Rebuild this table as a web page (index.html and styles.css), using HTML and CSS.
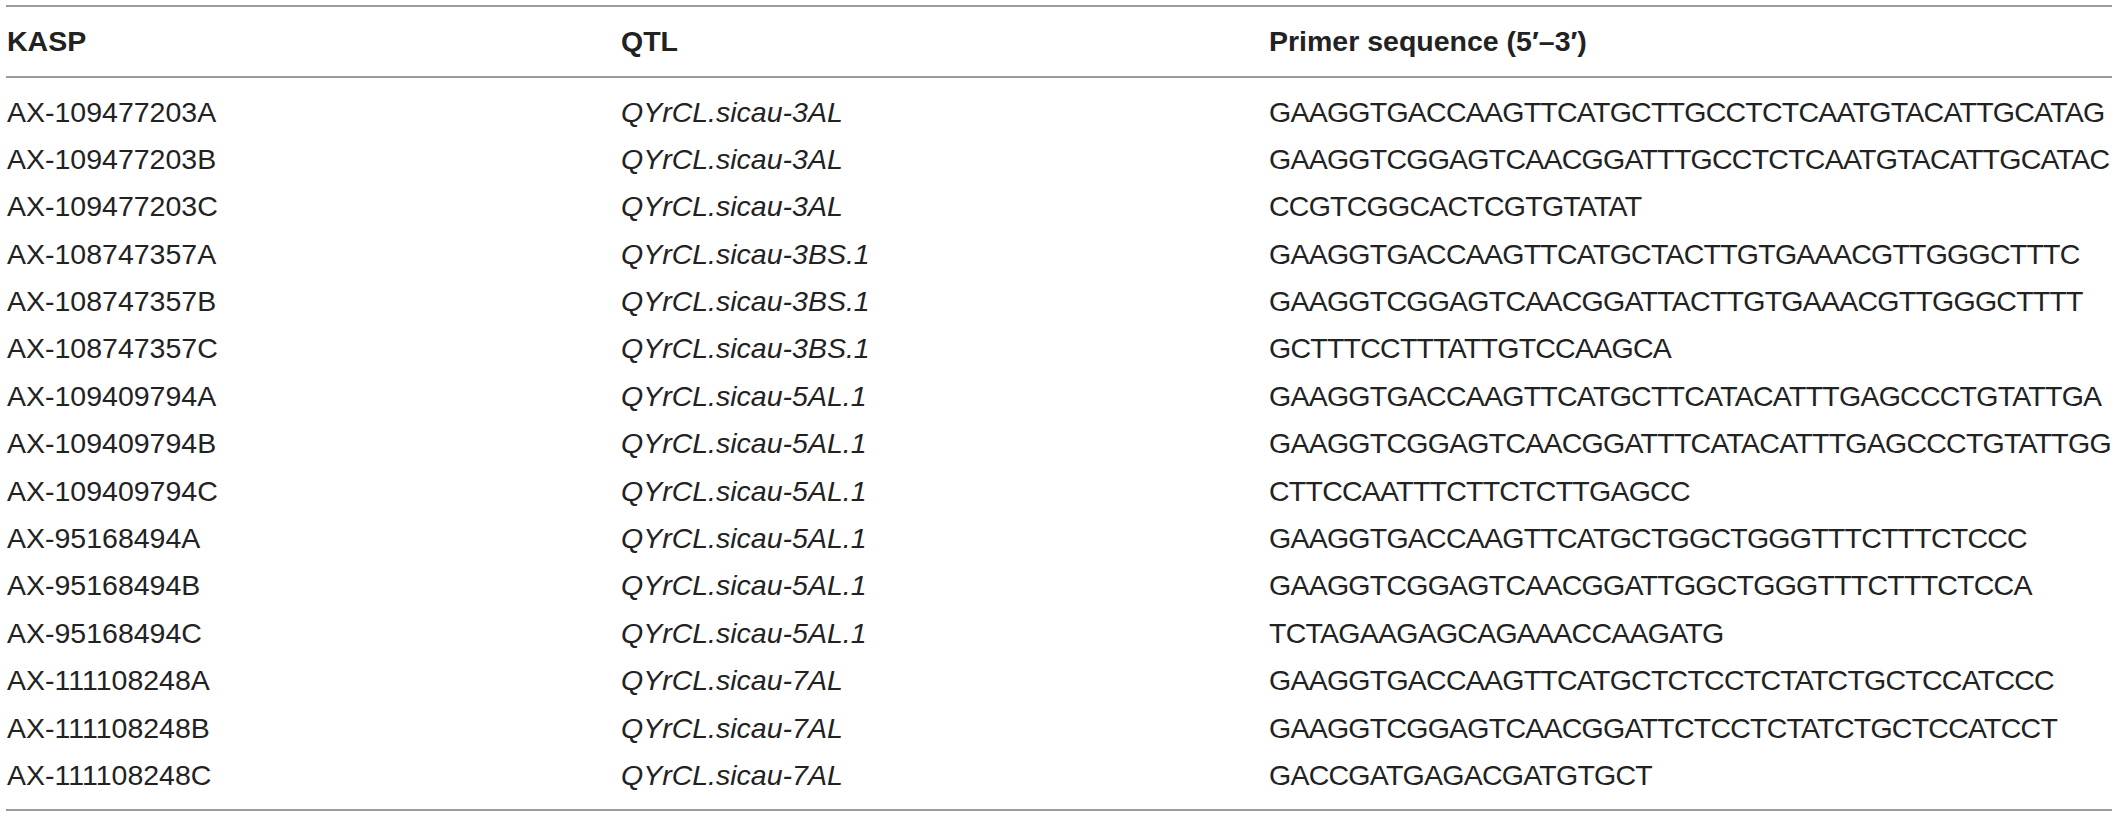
FILE: index.html
```html
<!DOCTYPE html>
<html>
<head>
<meta charset="utf-8">
<link rel="stylesheet" href="styles.css">
</head>
<body>
<div class="table">
  <div class="row head">
    <div class="cell">KASP</div>
    <div class="cell">QTL</div>
    <div class="cell">Primer sequence (5′–3′)</div>
  </div>
  <div class="body">
    <div class="row"><div class="cell">AX-109477203A</div><div class="cell qtl">QYrCL.sicau-3AL</div><div class="cell seq">GAAGGTGACCAAGTTCATGCTTGCCTCTCAATGTACATTGCATAG</div></div>
    <div class="row"><div class="cell">AX-109477203B</div><div class="cell qtl">QYrCL.sicau-3AL</div><div class="cell seq">GAAGGTCGGAGTCAACGGATTTGCCTCTCAATGTACATTGCATAC</div></div>
    <div class="row"><div class="cell">AX-109477203C</div><div class="cell qtl">QYrCL.sicau-3AL</div><div class="cell seq">CCGTCGGCACTCGTGTATAT</div></div>
    <div class="row"><div class="cell">AX-108747357A</div><div class="cell qtl">QYrCL.sicau-3BS.1</div><div class="cell seq">GAAGGTGACCAAGTTCATGCTACTTGTGAAACGTTGGGCTTTC</div></div>
    <div class="row"><div class="cell">AX-108747357B</div><div class="cell qtl">QYrCL.sicau-3BS.1</div><div class="cell seq">GAAGGTCGGAGTCAACGGATTACTTGTGAAACGTTGGGCTTTT</div></div>
    <div class="row"><div class="cell">AX-108747357C</div><div class="cell qtl">QYrCL.sicau-3BS.1</div><div class="cell seq">GCTTTCCTTTATTGTCCAAGCA</div></div>
    <div class="row"><div class="cell">AX-109409794A</div><div class="cell qtl">QYrCL.sicau-5AL.1</div><div class="cell seq">GAAGGTGACCAAGTTCATGCTTCATACATTTGAGCCCTGTATTGA</div></div>
    <div class="row"><div class="cell">AX-109409794B</div><div class="cell qtl">QYrCL.sicau-5AL.1</div><div class="cell seq">GAAGGTCGGAGTCAACGGATTTCATACATTTGAGCCCTGTATTGG</div></div>
    <div class="row"><div class="cell">AX-109409794C</div><div class="cell qtl">QYrCL.sicau-5AL.1</div><div class="cell seq">CTTCCAATTTCTTCTCTTGAGCC</div></div>
    <div class="row"><div class="cell">AX-95168494A</div><div class="cell qtl">QYrCL.sicau-5AL.1</div><div class="cell seq">GAAGGTGACCAAGTTCATGCTGGCTGGGTTTCTTTCTCCC</div></div>
    <div class="row"><div class="cell">AX-95168494B</div><div class="cell qtl">QYrCL.sicau-5AL.1</div><div class="cell seq">GAAGGTCGGAGTCAACGGATTGGCTGGGTTTCTTTCTCCA</div></div>
    <div class="row"><div class="cell">AX-95168494C</div><div class="cell qtl">QYrCL.sicau-5AL.1</div><div class="cell seq">TCTAGAAGAGCAGAAACCAAGATG</div></div>
    <div class="row"><div class="cell">AX-111108248A</div><div class="cell qtl">QYrCL.sicau-7AL</div><div class="cell seq">GAAGGTGACCAAGTTCATGCTCTCCTCTATCTGCTCCATCCC</div></div>
    <div class="row"><div class="cell">AX-111108248B</div><div class="cell qtl">QYrCL.sicau-7AL</div><div class="cell seq">GAAGGTCGGAGTCAACGGATTCTCCTCTATCTGCTCCATCCT</div></div>
    <div class="row"><div class="cell">AX-111108248C</div><div class="cell qtl">QYrCL.sicau-7AL</div><div class="cell seq">GACCGATGAGACGATGTGCT</div></div>
  </div>
</div>
</body>
</html>
```

FILE: styles.css
```css
html, body {
  margin: 0;
  padding: 0;
  background: #ffffff;
}

body {
  font-family: "Liberation Sans", Arial, Helvetica, sans-serif;
  font-size: 28.5px;
  color: #222222;
}

.table {
  margin: 5px 6px 0 6px;
  border-top: 2px solid #9b9b9b;
  border-bottom: 2px solid #9b9b9b;
}

.row {
  display: grid;
  grid-template-columns: 614px 648px 1fr;
  height: 47.4px;
  line-height: 47.4px;
  white-space: nowrap;
}

.row.head {
  height: 69px;
  line-height: 69px;
  font-weight: bold;
  border-bottom: 2px solid #9b9b9b;
}

.cell {
  padding-left: 1px;
}

.body {
  padding: 10.5px 0 10px 0;
}

.qtl {
  font-style: italic;
}

.seq {
  letter-spacing: -0.75px;
}
```
